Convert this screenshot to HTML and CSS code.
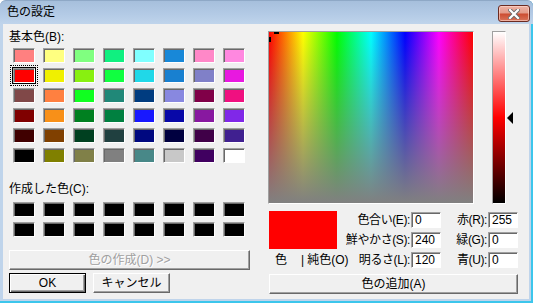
FILE: index.html
```html
<!DOCTYPE html>
<html lang="ja">
<head>
  <meta charset="UTF-8">
  <title>色の設定</title>
  <link rel="stylesheet" href="styles.css">
</head>
<body>
  <div class="window">
    <div class="titlebar">
      <span class="title">色の設定</span>
      <button class="close-btn">
        <svg width="12" height="10" viewBox="0 0 12 10">
          <path d="M2 1 L10 9 M10 1 L2 9" stroke="#6a6a6a" stroke-width="4" stroke-linecap="square"/>
          <path d="M2 1 L10 9 M10 1 L2 9" stroke="#fff" stroke-width="2.2" stroke-linecap="square"/>
        </svg>
      </button>
    </div>

    <div class="client">
      <div class="left-pane">
        <div class="label">基本色(B):</div>
        <div class="swatches" id="basic-colors"></div>
        <div class="label custom-label">作成した色(C):</div>
        <div class="swatches custom" id="custom-colors"></div>
        <button class="btn btn-wide" disabled>色の作成(D) &gt;&gt;</button>
        <div class="btn-row">
          <button class="btn btn-default">OK</button>
          <button class="btn">キャンセル</button>
        </div>
      </div>

      <div class="right-pane">
        <div class="picker">
          <div class="spectrum">
            <span class="cross-h"></span>
            <span class="cross-v"></span>
          </div>
          <div class="lum-wrap">
            <div class="lum"></div>
            <span class="lum-arrow"></span>
          </div>
        </div>

        <div class="bottom">
          <div class="preview">
            <div class="preview-box"></div>
            <div class="preview-label"><span>色</span><span class="sep">|</span><span class="solid">純色(O)</span></div>
          </div>
          <div class="fields">
            <label>色合い(E):</label><input type="text" value="0">
            <label>赤(R):</label><input type="text" value="255">
            <label>鮮やかさ(S):</label><input type="text" value="240">
            <label>緑(G):</label><input type="text" value="0">
            <label>明るさ(L):</label><input type="text" value="120">
            <label>青(U):</label><input type="text" value="0">
          </div>
        </div>

        <button class="btn btn-add">色の追加(A)</button>
      </div>
    </div>
  </div>

  <script>
    // 基本色 (8 x 6)
    const basicColors = [
      "#ff8080", "#ffff80", "#80ff80", "#10f080", "#80ffff", "#1888d8", "#ff88c8", "#ff88e0",
      "#ff0000", "#f0f000", "#88f010", "#10ff40", "#20d8e8", "#1880d0", "#8080c8", "#e818e0",
      "#804848", "#ff8040", "#10ff20", "#208878", "#003c80", "#8888e0", "#800048", "#f01080",
      "#800000", "#f89018", "#008020", "#008040", "#1818ff", "#0808a8", "#8818a0", "#8028e8",
      "#400000", "#804000", "#004020", "#204040", "#000880", "#000040", "#400048", "#402090",
      "#000000", "#808000", "#808048", "#808080", "#488888", "#c8c8c8", "#400060", "#ffffff"
    ];

    function fillSwatches(id, colors, selected) {
      const grid = document.getElementById(id);
      colors.forEach((color, i) => {
        const sw = document.createElement("div");
        sw.className = "swatch" + (i === selected ? " selected" : "");
        sw.style.background = color;
        grid.appendChild(sw);
      });
    }

    fillSwatches("basic-colors", basicColors, 8);
    fillSwatches("custom-colors", new Array(16).fill("#000000"), -1);
  </script>
</body>
</html>
```

FILE: styles.css
```css
body {
  margin: 0;
  font-family: "Liberation Sans", "Noto Sans CJK JP", sans-serif;
  font-size: 12px;
  color: #000;
  background: #fff;
}
.window {
  width: 533px;
  height: 303px;
  box-sizing: border-box;
  padding: 0 4px 4px 3px;
  display: flex;
  flex-direction: column;
  background: #bfd4eb;
  border-radius: 6px 6px 0 0;
  box-shadow: inset -2px -2px 0 #3cc6ec;
}
.titlebar {
  height: 24px;
  margin: 0 -4px 0 -3px;
  padding-left: 7px;
  display: flex;
  align-items: center;
  border-radius: 6px 6px 0 0;
  border-top: 1px solid #8ea8c6;
  box-sizing: border-box;
  background: linear-gradient(#a6bfdc, #b4cbe6 60%, #bfd4eb);
}
.title {
  line-height: 12px;
  margin-top: -1px;
}
.close-btn {
  margin-left: auto;
  margin-right: 3px;
  align-self: flex-start;
  margin-top: 4px;
  width: 32px;
  height: 17px;
  padding: 0;
  border: 1px solid #6b2b22;
  border-radius: 3px;
  display: flex;
  align-items: center;
  justify-content: center;
  background: linear-gradient(#eeb2a4, #e39a88 48%, #cc4c30 52%, #d9745a);
  box-shadow: inset 0 0 0 1px rgba(255, 220, 210, 0.6);
}
.client {
  flex: 1;
  display: flex;
  background: #f0f0f0;
}
.left-pane {
  width: 265px;
  padding: 7px 0 0 6px;
  box-sizing: border-box;
}
.label {
  height: 12px;
  line-height: 12px;
}
.custom-label {
  margin-top: 20px;
}
.swatches {
  display: grid;
  grid-template-columns: repeat(8, 22px);
  grid-auto-rows: 15px;
  column-gap: 8px;
  row-gap: 5px;
  margin: 5px 0 0 4px;
}
.swatches.custom {
  margin-top: 7px;
}
.swatch {
  position: relative;
  box-sizing: border-box;
  border: 1px solid;
  border-color: #a0a0a0 #fff #fff #a0a0a0;
  box-shadow: inset 1px 1px 0 #696969;
}
.swatch.selected::before {
  content: "";
  position: absolute;
  top: -2px;
  left: -2px;
  right: -2px;
  bottom: -2px;
  border: 1px solid #000;
}
.swatch.selected::after {
  content: "";
  position: absolute;
  top: -4px;
  left: -4px;
  right: -4px;
  bottom: -4px;
  border: 1px dotted #000;
}
.btn {
  display: block;
  padding: 0;
  font: inherit;
  line-height: 16px;
  color: #000;
  background: #f0f0f0;
  border: 1px solid;
  border-color: #fff #696969 #696969 #fff;
  box-shadow: inset -1px -1px 0 #a0a0a0;
}
.btn:disabled {
  color: #a0a0a0;
  text-shadow: 1px 1px 0 #fff;
}
.btn-wide {
  width: 241px;
  height: 20px;
  margin-top: 13px;
}
.btn-row {
  display: flex;
  gap: 7px;
  margin-top: 3px;
}
.btn-row .btn {
  width: 77px;
  height: 20px;
}
.btn-default {
  border: 1px solid #000;
  box-shadow: inset 1px 1px 0 #fff, inset -1px -1px 0 #696969, inset -2px -2px 0 #a0a0a0;
}
.right-pane {
  padding-top: 7px;
}
.picker {
  display: flex;
  height: 173px;
}
.spectrum {
  position: relative;
  width: 206px;
  height: 173px;
  box-sizing: border-box;
  border: 1px solid;
  border-color: #a0a0a0 #fff #fff #a0a0a0;
  background:
    linear-gradient(rgba(128, 128, 128, 0), #808080),
    linear-gradient(to right, #f00, #ff0 16.7%, #0f0 33.3%, #0ff 50%, #00f 66.7%, #f0f 83.3%, #f00);
}
.cross-h {
  position: absolute;
  left: 5px;
  top: 0;
  width: 5px;
  height: 2px;
  background: #000;
}
.cross-v {
  position: absolute;
  left: 0;
  top: 5px;
  width: 2px;
  height: 5px;
  background: #000;
}
.lum-wrap {
  position: relative;
  margin-left: 18px;
}
.lum {
  width: 14px;
  height: 173px;
  box-sizing: border-box;
  border: 1px solid;
  border-color: #a0a0a0 #fff #fff #a0a0a0;
  background: linear-gradient(#fff, #f00 50%, #000);
}
.lum-arrow {
  position: absolute;
  left: 15px;
  top: 81px;
  width: 0;
  height: 0;
  border-top: 6px solid transparent;
  border-bottom: 6px solid transparent;
  border-right: 6px solid #000;
}
.bottom {
  display: flex;
  height: 61px;
  margin-top: 7px;
}
.preview {
  width: 70px;
}
.preview-box {
  width: 68px;
  height: 38px;
  margin-left: 1px;
  background: #f00;
}
.preview-label {
  display: flex;
  margin-top: 5px;
  padding-left: 7px;
  line-height: 12px;
  white-space: nowrap;
}
.preview-label .sep {
  margin-left: 14px;
}
.preview-label .solid {
  margin-left: 3px;
}
.fields {
  display: grid;
  grid-template-columns: 72px 31px 46px 31px;
  grid-auto-rows: 20px;
  align-items: center;
  margin-top: -1px;
}
.fields label {
  text-align: right;
  line-height: 12px;
  white-space: nowrap;
  letter-spacing: -0.4px;
}
.fields input {
  width: 30px;
  height: 16px;
  margin: 0 0 0 1px;
  padding: 0 0 0 3px;
  box-sizing: border-box;
  font: inherit;
  background: #fff;
  border: 1px solid;
  border-color: #a0a0a0 #fff #fff #a0a0a0;
  box-shadow: inset 1px 1px 0 #696969;
  outline: none;
}
.btn-add {
  width: 249px;
  height: 20px;
  margin: 2px 0 0 1px;
}
```
